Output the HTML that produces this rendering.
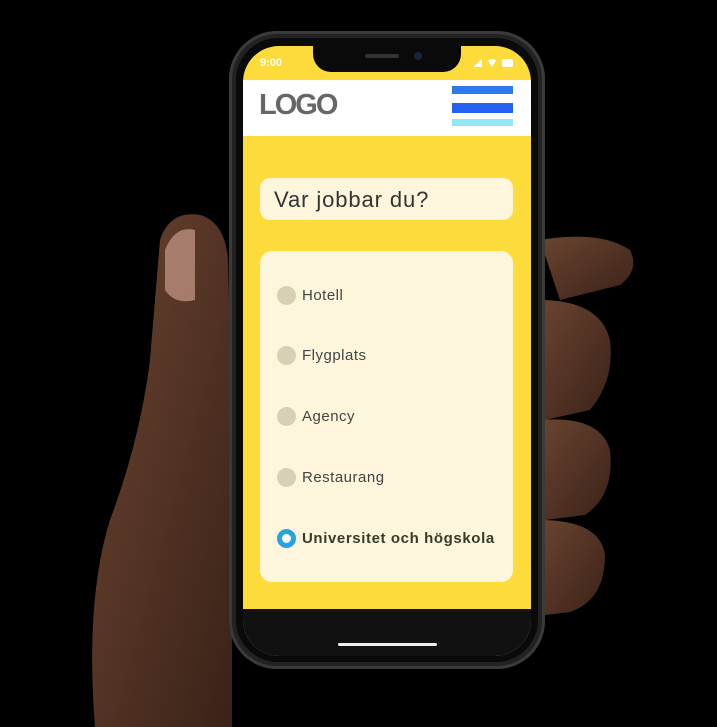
<!DOCTYPE html><html><head><meta charset="utf-8"><style>
body{margin:0;width:717px;height:727px;background:#000;position:relative;overflow:hidden;font-family:"Liberation Sans",sans-serif}
.a{position:absolute}
</style></head><body>
<svg class="a" style="left:0;top:0" width="717" height="727">
<defs><linearGradient id="h" x1="0" y1="0" x2="1" y2="1"><stop offset="0" stop-color="#6b4431"/><stop offset="1" stop-color="#3a2218"/></linearGradient></defs>
<path d="M160 240 Q170 210 200 215 Q225 222 228 260 L232 420 L232 727 L95 727 Q85 600 110 520 Q140 440 150 360 Z" fill="url(#h)"/>
<path d="M165 250 Q175 225 195 230 L195 300 Q175 305 165 290 Z" fill="#c89a8a" opacity=".7"/>
<path d="M540 240 Q600 230 630 250 Q640 270 620 285 L560 300 Z" fill="url(#h)"/>
<path d="M540 300 Q600 300 610 340 Q615 380 590 410 L545 420 Z" fill="url(#h)"/>
<path d="M540 420 Q600 415 610 450 Q615 495 585 515 L545 520 Z" fill="url(#h)"/>
<path d="M540 520 Q600 520 605 555 Q605 600 570 612 L545 615 Z" fill="url(#h)"/>
</svg>
<div class="a" style="left:229px;top:31px;width:316px;height:638px;border-radius:48px;background:#222;box-shadow:inset 0 0 0 3px #3a3a3a"></div>
<div class="a" style="left:236px;top:38px;width:302px;height:624px;border-radius:42px;background:#0a0a0a"></div>
<div class="a" style="left:243px;top:46px;width:288px;height:610px;border-radius:36px;background:#fcdb3a;overflow:hidden">
 <div class="a" style="left:70px;top:-2px;width:148px;height:28px;background:#0a0a0a;border-radius:0 0 18px 18px"></div>
 <div class="a" style="left:122px;top:8px;width:34px;height:4px;background:#333;border-radius:2px"></div>
 <div class="a" style="left:171px;top:6px;width:8px;height:8px;background:#1a2440;border-radius:50%"></div>
 <div class="a" style="left:17px;top:11px;color:#fff;font-size:11px;font-weight:bold">9:00</div>
 <div class="a" style="left:230px;top:13px;width:0;height:0;border-left:9px solid transparent;border-bottom:8px solid #fff"></div>
 <div class="a" style="left:244px;top:13px;width:10px;height:8px;background:#fff;border-radius:50% 50% 0 0;clip-path:polygon(0 0,100% 0,50% 100%)"></div>
 <div class="a" style="left:259px;top:13px;width:11px;height:8px;background:#fff;border-radius:2px"></div>
 <div class="a" style="left:0;top:34px;width:288px;height:56px;background:#fff"></div>
 <div class="a" style="left:16px;top:43px;font-size:29px;font-weight:bold;color:#666;letter-spacing:-2px">LOGO</div>
 <div class="a" style="left:209px;top:40px;width:61px;height:8px;background:#2f78ee"></div>
 <div class="a" style="left:209px;top:57px;width:61px;height:10px;background:#2561f0"></div>
 <div class="a" style="left:209px;top:73px;width:61px;height:7px;background:#90e8f4"></div>
 <div class="a" style="left:17px;top:132px;width:253px;height:42px;background:#fdf6dc;border-radius:10px"></div>
 <div class="a" style="left:31px;top:141px;font-size:22px;color:#333;letter-spacing:0.9px">Var jobbar du?</div>
 <div class="a" style="left:17px;top:205px;width:253px;height:331px;background:#fdf6dc;border-radius:12px"></div>
 <div class="a" style="left:34px;top:240px;width:19px;height:19px;border-radius:50%;background:#d6d0b4"></div>
 <div class="a" style="left:59px;top:241px;font-size:15px;color:#444;letter-spacing:0.5px">Hotell</div>
 <div class="a" style="left:34px;top:300px;width:19px;height:19px;border-radius:50%;background:#d6d0b4"></div>
 <div class="a" style="left:59px;top:301px;font-size:15px;color:#444;letter-spacing:0.5px">Flygplats</div>
 <div class="a" style="left:34px;top:361px;width:19px;height:19px;border-radius:50%;background:#d6d0b4"></div>
 <div class="a" style="left:59px;top:362px;font-size:15px;color:#444;letter-spacing:0.5px">Agency</div>
 <div class="a" style="left:34px;top:422px;width:19px;height:19px;border-radius:50%;background:#d6d0b4"></div>
 <div class="a" style="left:59px;top:423px;font-size:15px;color:#444;letter-spacing:0.5px">Restaurang</div>
 <div class="a" style="left:34px;top:483px;width:9px;height:9px;border-radius:50%;border:5px solid #2aa2e0;background:#fff"></div>
 <div class="a" style="left:59px;top:484px;font-size:15px;color:#3a3a2a;font-weight:bold;letter-spacing:0.6px">Universitet och högskola</div>
 <div class="a" style="left:0;top:563px;width:288px;height:50px;background:#111"></div>
 <div class="a" style="left:95px;top:597px;width:99px;height:3px;background:#eee;border-radius:2px"></div>
</div>
</body></html>
